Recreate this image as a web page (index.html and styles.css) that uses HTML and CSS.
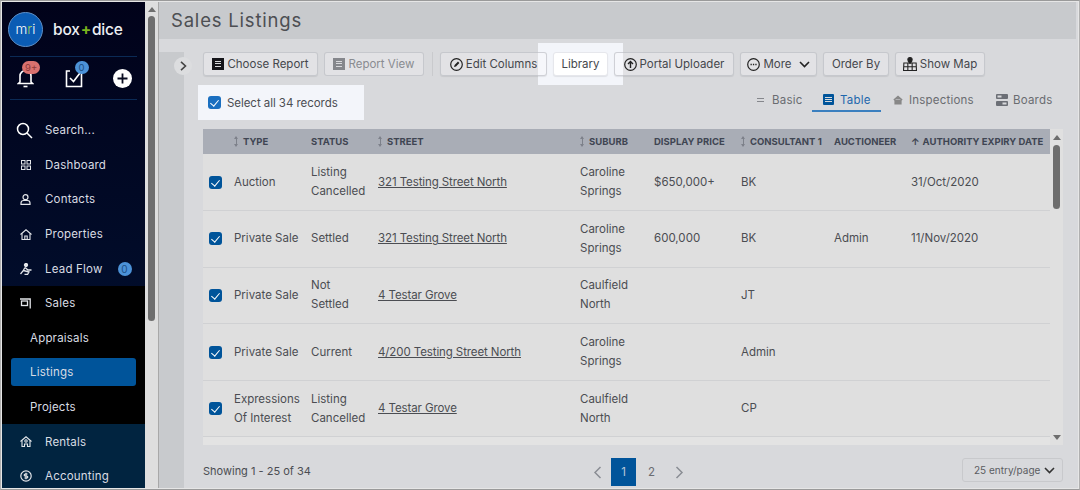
FILE: index.html
```html
<!DOCTYPE html>
<html lang="en">
<head>
    <meta charset="UTF-8">
    <meta name="viewport" content="width=device-width, initial-scale=1.0">
    <title>Sales Listings</title>
    <link rel="stylesheet" href="styles.css">
</head>
<body>
<div class="app">

    <aside class="sidebar">
        <div class="brand">
            <div class="brand-logo">m<span class="green">r</span>i</div>
            <div class="brand-name">box<span class="green plus">+</span>dice</div>
        </div>
        <div class="quick">
            <div class="quick-item">
                <svg width="17" height="20" viewBox="0 0 17 20" fill="none" stroke="#fff" stroke-width="1.6"><path d="M3 14V8a5.5 5.5 0 0 1 11 0v6l1.5 1.5h-14z"/><path d="M6.5 18.5h4"/></svg>
                <span class="badge badge-red">9+</span>
            </div>
            <div class="quick-item">
                <svg width="18" height="20" viewBox="0 0 18 20" fill="none" stroke="#fff" stroke-width="1.6"><path d="M5 3H1.5v15.500h15V5"/><path d="M5 10l3.500 3.500L15 5"/></svg>
                <span class="badge badge-blue">0</span>
            </div>
            <div class="quick-item">
                <svg width="19" height="19" viewBox="0 0 19 19"><circle cx="9.500" cy="9.500" r="9.500" fill="#fff"/><path d="M9.500 4.500v10M4.500 9.500h10" stroke="#0a0d22" stroke-width="1.800"/></svg>
            </div>
        </div>
        <nav class="nav">
            <div class="nav-item nav-search">
                <span class="nav-icon"><svg width="17" height="17" viewBox="0 0 17 17" fill="none" stroke="#fff" stroke-width="1.500"><circle cx="7" cy="7" r="5.500"/><path d="M11 11l5 5"/></svg></span>Search...
            </div>
            <div class="nav-item">
                <span class="nav-icon"><svg width="10" height="10" viewBox="0 0 10 10" fill="none" stroke="#e4e6ea"><rect x=".5" y=".5" width="3.500" height="3.500"/><rect x="6" y=".5" width="3.500" height="3.500"/><rect x=".5" y="6" width="3.500" height="3.500"/><rect x="6" y="6" width="3.500" height="3.500"/></svg></span>Dashboard
            </div>
            <div class="nav-item">
                <span class="nav-icon"><svg width="11" height="11" viewBox="0 0 11 11" fill="none" stroke="#e4e6ea" stroke-width="1.200"><circle cx="5.500" cy="3.200" r="2.500"/><path d="M1 10.400h9V9a2.500 2.500 0 0 0-2.500-2.500h-4A2.500 2.500 0 0 0 1 9z"/></svg></span>Contacts
            </div>
            <div class="nav-item">
                <span class="nav-icon"><svg width="12" height="11" viewBox="0 0 12 11" fill="none" stroke="#e4e6ea" stroke-width="1.100"><path d="M.5 5.500L6 .8l5.500 4.700"/><path d="M2 4.500v6h8v-6"/><path d="M4.800 10.500V7h2.400v3.500"/></svg></span>Properties
            </div>
            <div class="nav-item">
                <span class="nav-icon"><svg width="12" height="12" viewBox="0 0 12 12" fill="none" stroke="#e4e6ea" stroke-width="1.300"><circle cx="6" cy="2" r="1.500" fill="#e4e6ea"/><path d="M5 4.500L3 8l-2.500 3M5 4.500l3 2.500h3.500M3.500 7.500l5.500 1.500-1.500 2.500h-3"/></svg></span>Lead Flow<span class="badge-flow">0</span>
            </div>
            <div class="nav-group">
                <div class="nav-item">
                    <span class="nav-icon"><svg width="11" height="11" viewBox="0 0 11 11" fill="none" stroke="#e4e6ea" stroke-width="1.300"><path d="M0 1h10.200v9.500"/><rect x="1.500" y="3" width="6" height="4.500"/></svg></span>Sales
                </div>
                <div class="nav-item nav-sub">Appraisals</div>
                <div class="nav-item nav-sub nav-active">Listings</div>
                <div class="nav-item nav-sub">Projects</div>
            </div>
            <div class="nav-rest">
                <div class="nav-item">
                    <span class="nav-icon"><svg width="12" height="11" viewBox="0 0 12 11" fill="none" stroke="#e4e6ea" stroke-width="1.100"><path d="M.5 5.500L6 .8l5.500 4.700"/><path d="M2 4.500v6h2.500V8h3v2.500H10v-6"/><circle cx="6" cy="5" r="1.200"/></svg></span>Rentals
                </div>
                <div class="nav-item">
                    <span class="nav-icon"><svg width="12" height="12" viewBox="0 0 12 12" fill="none" stroke="#e4e6ea" stroke-width="1.200"><circle cx="6" cy="6" r="5.200"/><path d="M7.600 4H5.200a1 1 0 0 0 0 2h1.600a1 1 0 0 1 0 2H4.400M6 2.800v6.400"/></svg></span>Accounting
                </div>
            </div>
        </nav>
    </aside>

    <div class="page-scroll">
        <span class="tri-up"></span>
        <div class="page-thumb"></div>
    </div>

    <main class="main">
        <header class="title-bar">Sales Listings</header>
        <div class="body">
            <div class="side-strip">
                <div class="toggle">
                    <svg width="7" height="10" viewBox="0 0 7 10" fill="none" stroke="#444" stroke-width="1.600"><path d="M1 .8L5.500 5 1 9.200"/></svg>
                </div>
            </div>
            <div class="content">

                <div class="toolbar">
                    <div class="library-spot"></div>
                    <button class="btn w-choose"><span class="ico-report"></span>Choose Report</button>
                    <button class="btn btn-off w-view"><span class="ico-report"></span>Report View</button>
                    <span class="tool-sep"></span>
                    <button class="btn w-edit">
                        <svg width="13" height="13" viewBox="0 0 13 13" fill="none" stroke="#222" stroke-width="1.200"><circle cx="6.500" cy="6.500" r="5.800"/><path d="M4 9l.6-2L8 3.600 9.400 5 6 8.400z" fill="#222" stroke="none"/></svg>
                        Edit Columns
                    </button>
                    <button class="btn btn-lib w-lib">Library</button>
                    <button class="btn w-portal">
                        <svg width="13" height="13" viewBox="0 0 13 13" fill="none" stroke="#222" stroke-width="1.200"><circle cx="6.500" cy="6.500" r="5.800"/><path d="M6.500 10V3.500M4 6l2.500-2.500L9 6" stroke-width="1.400"/></svg>
                        Portal Uploader
                    </button>
                    <button class="btn w-more">
                        <svg width="13" height="13" viewBox="0 0 13 13" fill="none" stroke="#222" stroke-width="1.200"><circle cx="6.500" cy="6.500" r="5.800"/><path d="M3.500 6.500h1.300M5.900 6.500h1.300M8.300 6.500h1.300" stroke-width="1.500"/></svg>
                        More
                        <svg class="caret" width="11" height="7" viewBox="0 0 11 7" fill="none" stroke="#222" stroke-width="1.600"><path d="M1 1l4.500 4.500L10 1"/></svg>
                    </button>
                    <button class="btn w-order">Order By</button>
                    <button class="btn w-map">
                        <svg width="14" height="14" viewBox="0 0 13 13" fill="none" stroke="#222"><path d="M.8 5.500h11.400l.3 7H.5zM.6 9h11.800M4.500 5.500v7M8.500 5.500v7"/><path d="M6.500.5a2 2 0 0 1 2 2C8.500 4 6.500 6 6.500 6s-2-2-2-3.500a2 2 0 0 1 2-2z" fill="#222"/></svg>
                        Show Map
                    </button>
                </div>

                <div class="subbar">
                    <label class="select-all"><span class="check"></span>Select all 34 records</label>
                    <div class="tabs">
                        <div class="tab w-basic"><span class="ico-lines"></span>Basic</div>
                        <div class="tab tab-on w-table"><span class="ico-table"></span>Table</div>
                        <div class="tab w-insp">
                            <svg width="10" height="10" viewBox="0 0 10 10" fill="#888" stroke="#888" stroke-width="1.200"><path d="M.8 5L5 1.200 9.200 5M2 4.500V9h6V4.500"/></svg>
                            Inspections
                        </div>
                        <div class="tab w-boards">
                            <svg width="12" height="12" viewBox="0 0 12 12"><rect width="12" height="5" rx="1" fill="#6c6f76"/><rect y="7" width="12" height="5" rx="1" fill="#6c6f76"/><rect x="1.500" y="1.500" width="4" height="2" fill="#d8d9dc"/><rect x="6.500" y="8.500" width="4" height="2" fill="#d8d9dc"/></svg>
                            Boards
                        </div>
                    </div>
                </div>

                <div class="grid-wrap">
                    <div class="grid-box">
                        <table class="grid">
                            <colgroup>
                                <col class="c-check"><col class="c-type"><col class="c-status"><col class="c-street"><col class="c-suburb"><col class="c-price"><col class="c-cons"><col class="c-auct"><col class="c-date">
                            </colgroup>
                            <thead>
                                <tr>
                                    <th></th>
                                    <th><span class="sort"></span>TYPE</th>
                                    <th>STATUS</th>
                                    <th><span class="sort"></span>STREET</th>
                                    <th><span class="sort"></span>SUBURB</th>
                                    <th>DISPLAY PRICE</th>
                                    <th><span class="sort"></span>CONSULTANT 1</th>
                                    <th>AUCTIONEER</th>
                                    <th><span class="sort-up">&#8593;</span>AUTHORITY EXPIRY DATE</th>
                                </tr>
                            </thead>
                            <tbody>
                                <tr>
                                    <td><span class="check"></span></td>
                                    <td>Auction</td>
                                    <td>Listing Cancelled</td>
                                    <td><a class="link">321 Testing Street North</a></td>
                                    <td>Caroline Springs</td>
                                    <td>$650,000+</td>
                                    <td>BK</td>
                                    <td></td>
                                    <td>31/Oct/2020</td>
                                </tr>
                                <tr>
                                    <td><span class="check"></span></td>
                                    <td>Private Sale</td>
                                    <td>Settled</td>
                                    <td><a class="link">321 Testing Street North</a></td>
                                    <td>Caroline Springs</td>
                                    <td>600,000</td>
                                    <td>BK</td>
                                    <td>Admin</td>
                                    <td>11/Nov/2020</td>
                                </tr>
                                <tr>
                                    <td><span class="check"></span></td>
                                    <td>Private Sale</td>
                                    <td>Not Settled</td>
                                    <td><a class="link">4 Testar Grove</a></td>
                                    <td>Caulfield North</td>
                                    <td></td>
                                    <td>JT</td>
                                    <td></td>
                                    <td></td>
                                </tr>
                                <tr>
                                    <td><span class="check"></span></td>
                                    <td>Private Sale</td>
                                    <td>Current</td>
                                    <td><a class="link">4/200 Testing Street North</a></td>
                                    <td>Caroline Springs</td>
                                    <td></td>
                                    <td>Admin</td>
                                    <td></td>
                                    <td></td>
                                </tr>
                                <tr>
                                    <td><span class="check"></span></td>
                                    <td>Expressions Of Interest</td>
                                    <td>Listing Cancelled</td>
                                    <td><a class="link">4 Testar Grove</a></td>
                                    <td>Caulfield North</td>
                                    <td></td>
                                    <td>CP</td>
                                    <td></td>
                                    <td></td>
                                </tr>
                            </tbody>
                        </table>
                    </div>
                    <div class="grid-scroll">
                        <span class="tri-up"></span>
                        <div class="grid-thumb"></div>
                        <span class="tri-down"></span>
                    </div>
                </div>

                <footer class="foot">
                    <div class="foot-count">Showing 1 - 25 of 34</div>
                    <div class="pager">
                        <svg width="9" height="13" viewBox="0 0 9 13" fill="none" stroke="#8a8d94" stroke-width="1.500"><path d="M7.500 1L2 6.500 7.500 12"/></svg>
                        <span class="page page-on">1</span>
                        <span class="page">2</span>
                        <svg width="9" height="13" viewBox="0 0 9 13" fill="none" stroke="#8a8d94" stroke-width="1.500"><path d="M1.500 1L7 6.500 1.500 12"/></svg>
                    </div>
                    <div class="per-page">25 entry/page
                        <svg width="11" height="7" viewBox="0 0 11 7" fill="none" stroke="#333" stroke-width="1.600"><path d="M1 1l4.500 4.500L10 1"/></svg>
                    </div>
                </footer>
            </div>
        </div>
    </main>
</div>
</body>
</html>
```

FILE: styles.css
```css
* {
    box-sizing: border-box;
}

html, body {
    margin: 0;
    height: 100%;
    overflow: hidden;
}

body {
    background-color: #e6e6e6;
    font-family: Inter, "Liberation Sans", sans-serif;
    font-size: 11.5px;
    color: #4b4d52;
}

.app {
    display: flex;
    height: 490px;
    padding: 1px 1px 1px 1px;
    border-top: 1px solid #9a9a9a;
    border-bottom: 1px solid #9a9a9a;
    border-left: 1px solid #b0b0b0;
    border-right: 1px solid #b0b0b0;
}

.green {
    color: #7ab51d;
}

/* sidebar */

.sidebar {
    width: 143px;
    flex: none;
    overflow: hidden;
    color: #d9dce3;
    background: linear-gradient(#01021a, #011436);
}

.brand {
    display: flex;
    align-items: center;
    height: 54px;
    padding-left: 6px;
    gap: 10px;
}

.brand-logo {
    width: 35px;
    height: 35px;
    border-radius: 50%;
    background-color: #0b5cb4;
    border: 1px solid #5e8fc7;
    color: #fff;
    font-size: 13.500px;
    font-weight: 300;
    line-height: 32px;
    text-align: center;
}

.brand-logo .green {
    color: #a5cf5b;
}

.brand-name {
    color: #eceef2;
    font-size: 15.500px;
    font-weight: 500;
    letter-spacing: -.2px;
}

.plus {
    font-weight: 700;
    margin: 0 1px;
}

.quick {
    display: flex;
    justify-content: space-between;
    align-items: center;
    height: 44px;
    margin: 0 8px;
    padding: 0 5px 0 7px;
    border-top: 1px solid #0b2a55;
    border-bottom: 1px solid #0b2a55;
}

.quick-item {
    position: relative;
    display: flex;
}

.badge {
    position: absolute;
    top: -7px;
    left: 5px;
    height: 13px;
    min-width: 14px;
    padding: 0 3px;
    border-radius: 7px;
    font-size: 9.5px;
    line-height: 13px;
    text-align: center;
}

.badge-red {
    left: 5px;
    width: 18px;
    background-color: #d9716f;
    color: #8e3a3a;
}

.badge-blue {
    left: 10px;
    background-color: #4c92d8;
    color: #1c4f86;
}

.nav {
    padding-top: 13px;
}

.nav-item {
    display: flex;
    align-items: center;
    height: 34.6px;
    letter-spacing: .2px;
}

.nav-icon {
    display: flex;
    justify-content: center;
    width: 43px;
    padding-left: 4px;
    flex: none;
}

.nav-search .nav-icon {
    padding-left: 1px;
}

.badge-flow {
    width: 14px;
    height: 14px;
    margin-left: 15px;
    border-radius: 50%;
    background-color: #4c92d8;
    color: #1c4f86;
    font-size: 10px;
    line-height: 14px;
    text-align: center;
}

.nav-group {
    background-color: #000;
}

.nav-sub {
    padding-left: 28px;
}

.nav-active {
    height: 28px;
    margin: 3.300px 9px;
    padding-left: 19px;
    border-radius: 3px;
    background-color: #00549a;
}

.nav-rest {
    background-color: #012440;
    padding-bottom: 20px;
}

/* page scrollbar */

.page-scroll {
    width: 13px;
    flex: none;
    background-color: #dedede;
    padding: 5px 3px 0;
    display: flex;
    flex-direction: column;
    align-items: center;
}

.page-thumb {
    width: 7px;
    height: 305px;
    margin-top: 4px;
    border-radius: 4px;
    background-color: #6e6e6e;
}

.tri-up, .tri-down {
    display: block;
    width: 0;
    height: 0;
    border-left: 4px solid transparent;
    border-right: 4px solid transparent;
}

.tri-up {
    border-bottom: 5px solid #6e6e6e;
}

.tri-down {
    border-top: 5px solid #6e6e6e;
}

/* main */

.main {
    flex: 1;
    min-width: 0;
    display: flex;
    flex-direction: column;
    border-left: 1px solid #a8a8a8;
    border-right: 2px solid #d8d9dc;
}

.title-bar {
    height: 37px;
    padding-left: 12px;
    background-color: #c8cacd;
    color: #4d4f53;
    font-size: 18.500px;
    line-height: 37px;
    letter-spacing: .8px;
}

.body {
    flex: 1;
    display: flex;
    min-height: 0;
    padding-top: 13px;
    background-color: #d8d9dc;
}

.side-strip {
    position: relative;
    width: 25px;
    flex: none;
    background-color: #c8cacd;
}

.toggle {
    position: absolute;
    top: 5px;
    left: 15px;
    display: flex;
    align-items: center;
    justify-content: center;
    width: 18px;
    height: 18px;
    border-radius: 50%;
    background-color: #dcdddf;
}

.content {
    flex: 1;
    min-width: 0;
    padding-left: 19px;
    display: flex;
    flex-direction: column;
}

/* toolbar */

.toolbar {
    position: relative;
    display: flex;
    align-items: center;
    gap: 6px;
    height: 24px;
}

.library-spot {
    position: absolute;
    top: -9px;
    left: 335px;
    width: 85px;
    height: 42px;
    background-color: #f3f5fa;
}

.btn {
    position: relative;
    display: flex;
    align-items: center;
    justify-content: center;
    gap: 3px;
    height: 24px;
    padding: 0;
    border: 1px solid rgba(180, 182, 188, .6);
    border-radius: 3px;
    background-color: rgba(255, 255, 255, .25);
    box-shadow: 0 1px 1px rgba(0, 0, 0, .08);
    color: #45474c;
    font-family: inherit;
    font-size: 11.5px;
}

.btn-off {
    color: #8a8c91;
    box-shadow: none;
}

.btn-off .ico-report {
    background-color: #85878c;
}

.btn-lib {
    background-color: #fff;
    border-color: #e6e7ec;
}

.w-choose { width: 115px; }
.w-view { width: 100px; }
.w-edit { width: 107px; }
.w-lib { width: 55px; }
.w-portal { width: 120px; }
.w-more { width: 77px; }
.w-order { width: 66px; }
.w-map { width: 90px; }

.caret {
    margin-left: 4px;
}

.tool-sep {
    width: 1px;
    height: 24px;
    margin: 0 1px 0 2px;
    background-color: #c9cacd;
}

.ico-report {
    position: relative;
    width: 12px;
    height: 12px;
    background-color: #15151a;
}

.ico-report::after {
    content: "";
    position: absolute;
    top: 3px;
    left: 3px;
    width: 6px;
    height: 6px;
    background: repeating-linear-gradient(#d8d9dc 0 1px, transparent 1px 2.500px);
}

/* select all + view tabs */

.subbar {
    position: relative;
    height: 53px;
}

.select-all {
    position: absolute;
    top: 9px;
    left: -5px;
    display: flex;
    align-items: center;
    gap: 6px;
    width: 166px;
    height: 35px;
    padding-left: 10px;
    background-color: #f3f5fa;
    letter-spacing: -.05px;
}

.check {
    position: relative;
    display: block;
    width: 13px;
    height: 13px;
    border-radius: 3px;
    background-color: #00549a;
}

.check::after {
    content: "";
    position: absolute;
    top: 2px;
    left: 4px;
    width: 4px;
    height: 7px;
    border: solid #fff;
    border-width: 0 1.500px 1.500px 0;
    transform: rotate(40deg);
}

.select-all .check {
    background-color: #1a6fc0;
}

.tabs {
    position: absolute;
    top: 11px;
    left: 543px;
    display: flex;
    height: 25px;
    color: #6a6c71;
}

.tab {
    display: flex;
    align-items: center;
    gap: 7px;
    padding-left: 11px;
    letter-spacing: .2px;
}

.w-basic { width: 66px; padding-left: 11px; gap: 8px; }
.w-table { width: 69px; gap: 6px; }
.w-insp { width: 103px; padding-left: 12px; gap: 6px; }
.w-boards { width: 70px; padding-left: 12px; gap: 5px; }

.tab-on {
    color: #1e67ad;
    border-bottom: 2px solid #3a7fbf;
    padding-top: 2px;
}

.ico-lines {
    width: 7px;
    height: 4px;
    border-top: 1px solid #85878c;
    border-bottom: 1px solid #85878c;
}

.ico-table {
    position: relative;
    width: 11px;
    height: 11px;
    border-radius: 1px;
    background-color: #00549a;
}

.ico-table::after {
    content: "";
    position: absolute;
    top: 3px;
    left: 2px;
    width: 7px;
    height: 5px;
    background: repeating-linear-gradient(#d8d9dc 0 1px, transparent 1px 2px);
}

/* table */

.grid-wrap {
    display: flex;
    height: 316px;
    width: 860px;
}

.grid-box {
    width: 847px;
    flex: none;
    overflow: hidden;
    background-color: #e3e3e3;
}

.grid {
    width: 847px;
    table-layout: fixed;
    border-collapse: collapse;
}

.c-check { width: 31px; }
.c-type { width: 77px; }
.c-status { width: 67px; }
.c-street { width: 202px; }
.c-suburb { width: 74px; }
.c-price { width: 87px; }
.c-cons { width: 93px; }
.c-auct { width: 77px; }
.c-date { width: 139px; }

.grid th {
    height: 25px;
    padding: 0;
    background-color: #a9adb6;
    color: #3f4552;
    font-size: 9.500px;
    font-weight: 700;
    text-align: left;
    white-space: nowrap;
}

.grid td {
    height: 56.600px;
    padding: 0 9px 0 0;
    background-color: #dfdfdf;
    border-bottom: 1px solid #d0d1d3;
    color: #4b4d52;
    line-height: 19px;
}

.grid td:first-child {
    padding-left: 6px;
}

.link {
    color: #4b4d52;
    text-decoration: underline;
    white-space: nowrap;
    letter-spacing: -.1px;
}

.sort {
    display: inline-block;
    position: relative;
    width: 1px;
    height: 9px;
    margin: 0 6px 0 2px;
    vertical-align: -1px;
    background-color: #7d818a;
}

.sort::before, .sort::after {
    content: "";
    position: absolute;
    left: -2px;
    width: 0;
    height: 0;
    border-left: 2.500px solid transparent;
    border-right: 2.500px solid transparent;
}

.sort::before {
    top: -1px;
    border-bottom: 3px solid #7d818a;
}

.sort::after {
    bottom: -1px;
    border-top: 3px solid #7d818a;
}

.sort-up {
    margin-right: 3px;
}

.grid-scroll {
    position: relative;
    width: 13px;
    flex: none;
    background-color: #e0e0e0;
    padding-top: 6px;
    display: flex;
    flex-direction: column;
    align-items: center;
}

.grid-thumb {
    width: 7px;
    height: 64px;
    margin-top: 5px;
    border-radius: 4px;
    background-color: #6e6e6e;
}

.grid-scroll .tri-down {
    margin-top: auto;
    margin-bottom: 5px;
}

/* footer */

.foot {
    position: relative;
    display: flex;
    align-items: center;
    height: 43px;
    width: 860px;
    padding-top: 9px;
}

.foot-count {
    font-size: 11px;
}

.pager {
    position: absolute;
    top: 13px;
    left: 390px;
    display: flex;
    align-items: center;
    height: 28px;
}

.page {
    width: 25px;
    height: 28px;
    line-height: 28px;
    text-align: center;
    color: #6a6c71;
}

.page-on {
    margin-left: 9px;
    background-color: #00549a;
    color: #b9c8d8;
}

.page + .page {
    margin: 0 11px 0 3px;
}

.per-page {
    position: absolute;
    top: 13px;
    right: 0;
    display: flex;
    align-items: center;
    justify-content: space-between;
    width: 101px;
    height: 24px;
    padding: 0 7px 0 11px;
    border: 1px solid #c8c9cc;
    border-radius: 3px;
    font-size: 10px;
    color: #5b5d62;
}
```
